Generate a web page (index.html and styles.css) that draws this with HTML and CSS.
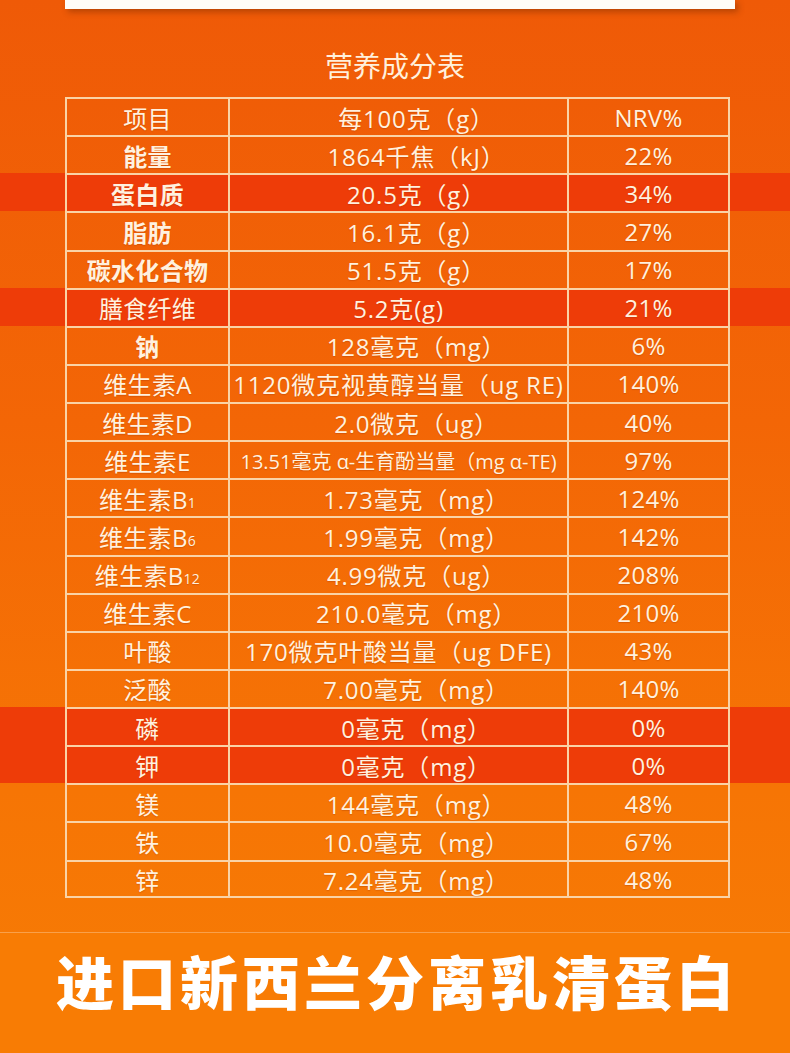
FILE: index.html
```html
<!DOCTYPE html>
<html lang="zh-CN">
<head>
<meta charset="utf-8">
<title>营养成分表</title>
<link rel="stylesheet" href="styles.css">
</head>
<body>
<div class="page">
  <div class="top-card"></div>
  <h1 class="title">营养成分表</h1>
  <div class="table">
    <div class="row"><div class="cells"><div class="c">项目</div><div class="c v fw">每100克（g）</div><div class="c">NRV%</div></div></div>
    <div class="row"><div class="cells"><div class="c b">能量</div><div class="c v fw">1864千焦（kJ）</div><div class="c">22%</div></div></div>
    <div class="row hl"><div class="cells"><div class="c b">蛋白质</div><div class="c v fw">20.5克（g）</div><div class="c">34%</div></div></div>
    <div class="row"><div class="cells"><div class="c b">脂肪</div><div class="c v fw">16.1克（g）</div><div class="c">27%</div></div></div>
    <div class="row"><div class="cells"><div class="c b">碳水化合物</div><div class="c v fw">51.5克（g）</div><div class="c">17%</div></div></div>
    <div class="row hl"><div class="cells"><div class="c">膳食纤维</div><div class="c v">5.2克(g)</div><div class="c">21%</div></div></div>
    <div class="row"><div class="cells"><div class="c b">钠</div><div class="c v fw">128毫克（mg）</div><div class="c">6%</div></div></div>
    <div class="row"><div class="cells"><div class="c">维生素A</div><div class="c v">1120微克视黄醇当量（ug RE)</div><div class="c">140%</div></div></div>
    <div class="row"><div class="cells"><div class="c">维生素D</div><div class="c v fw">2.0微克（ug）</div><div class="c">40%</div></div></div>
    <div class="row"><div class="cells"><div class="c">维生素E</div><div class="c small">13.51毫克 α-生育酚当量（mg α-TE)</div><div class="c">97%</div></div></div>
    <div class="row"><div class="cells"><div class="c">维生素B<span class="sub">1</span></div><div class="c v fw">1.73毫克（mg）</div><div class="c">124%</div></div></div>
    <div class="row"><div class="cells"><div class="c">维生素B<span class="sub">6</span></div><div class="c v fw">1.99毫克（mg）</div><div class="c">142%</div></div></div>
    <div class="row"><div class="cells"><div class="c">维生素B<span class="sub">12</span></div><div class="c v fw">4.99微克（ug）</div><div class="c">208%</div></div></div>
    <div class="row"><div class="cells"><div class="c">维生素C</div><div class="c v fw">210.0毫克（mg）</div><div class="c">210%</div></div></div>
    <div class="row"><div class="cells"><div class="c">叶酸</div><div class="c v">170微克叶酸当量（ug DFE)</div><div class="c">43%</div></div></div>
    <div class="row"><div class="cells"><div class="c">泛酸</div><div class="c v fw">7.00毫克（mg）</div><div class="c">140%</div></div></div>
    <div class="row hl"><div class="cells"><div class="c">磷</div><div class="c v fw">0毫克（mg）</div><div class="c">0%</div></div></div>
    <div class="row hl"><div class="cells"><div class="c">钾</div><div class="c v fw">0毫克（mg）</div><div class="c">0%</div></div></div>
    <div class="row"><div class="cells"><div class="c">镁</div><div class="c v fw">144毫克（mg）</div><div class="c">48%</div></div></div>
    <div class="row"><div class="cells"><div class="c">铁</div><div class="c v fw">10.0毫克（mg）</div><div class="c">67%</div></div></div>
    <div class="row last"><div class="cells"><div class="c">锌</div><div class="c v fw">7.24毫克（mg）</div><div class="c">48%</div></div></div>
  </div>
  <div class="spacer"></div>
  <div class="banner">进口新西兰分离乳清蛋白</div>
</div>
</body>
</html>
```

FILE: styles.css
```css
html, body {
  margin: 0;
  padding: 0;
}

body {
  width: 790px;
  height: 1053px;
  overflow: hidden;
  font-family: "Open Sans", "Noto Sans CJK SC", sans-serif;
}

.page {
  width: 790px;
  height: 1053px;
  display: flex;
  flex-direction: column;
  background: linear-gradient(180deg, #ef5a07 0%, #f36606 40%, #f67505 75%, #f77c05 100%);
}

.top-card {
  flex: none;
  width: 670px;
  height: 9px;
  margin-left: 65px;
  background: #fffdf8;
  box-shadow: 3px 3px 6px rgba(110, 40, 0, 0.45);
}

.title {
  flex: none;
  margin: 0;
  height: 88px;
  box-sizing: border-box;
  padding-top: 40px;
  font-family: "Noto Sans CJK SC", sans-serif;
  font-size: 28px;
  line-height: 32px;
  font-weight: 400;
  text-align: center;
  color: #fff0dc;
}

.table {
  flex: none;
  display: flex;
  flex-direction: column;
}

.row {
  height: 38.14px;
  flex: none;
}

.row.hl {
  background: #ee3c08;
}

.cells {
  margin-left: 65px;
  width: 665px;
  height: 100%;
  box-sizing: border-box;
  display: grid;
  grid-template-columns: 163px 339px 161px;
  border-left: 2px solid #fad3a6;
  border-top: 2px solid #fad3a6;
}

.row.last .cells {
  border-bottom: 2px solid #fad3a6;
}

.c {
  box-sizing: border-box;
  border-right: 2px solid #fad3a6;
  display: flex;
  align-items: center;
  justify-content: center;
  white-space: nowrap;
  font-size: 24px;
  letter-spacing: 0.3px;
  color: #fff1df;
  text-shadow: 0 1px 1px rgba(140, 40, 0, 0.25);
}

.c.b {
  font-weight: 700;
}

.c.v {
  letter-spacing: 0.8px;
}

.c.fw {
  padding-left: 36px;
}

.c.small {
  font-size: 20px;
  letter-spacing: 0;
}

.sub {
  font-size: 14px;
  position: relative;
  top: 4px;
}

.spacer {
  flex: 1;
}

.banner {
  flex: none;
  height: 121px;
  box-sizing: border-box;
  padding-top: 12px;
  padding-left: 4px;
  background: #f87c04;
  border-top: 1px solid #f9a04a;
  color: #ffffff;
  font-family: "Noto Sans CJK SC", sans-serif;
  font-size: 58px;
  line-height: 70px;
  font-weight: 900;
  letter-spacing: 4px;
  text-align: center;
}
```
